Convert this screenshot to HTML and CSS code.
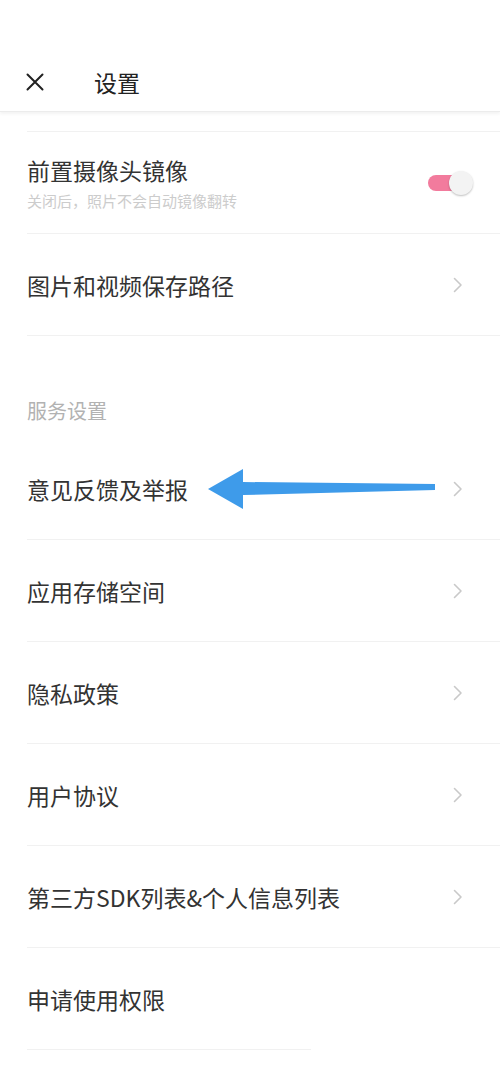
FILE: index.html
```html
<!DOCTYPE html>
<html lang="zh">
<head>
<meta charset="utf-8">
<title>设置</title>
<link rel="stylesheet" href="styles.css">
</head>
<body>
<div class="page">
  <header class="header">
    <svg class="close" width="18" height="18" viewBox="0 0 18 18">
      <path d="M1.5 1.5 L16.5 16.5 M16.5 1.5 L1.5 16.5" stroke="#222" stroke-width="2" stroke-linecap="round" fill="none"/>
    </svg>
    <h1 class="title">设置</h1>
  </header>

  <div class="top-gap"></div>

  <div class="row">
    <div class="text-block">
      <div class="label">前置摄像头镜像</div>
      <div class="sub">关闭后，照片不会自动镜像翻转</div>
    </div>
    <div class="toggle"><span class="track"></span><span class="knob"></span></div>
  </div>

  <div class="row">
    <div class="label">图片和视频保存路径</div>
    <svg class="chev" width="10" height="16" viewBox="0 0 10 16"><polyline points="1.5,1.5 8,8 1.5,14.5" fill="none" stroke="#c9c9c9" stroke-width="1.6" stroke-linecap="round" stroke-linejoin="round"/></svg>
  </div>

  <div class="section">服务设置</div>

  <div class="row annotated">
    <div class="label">意见反馈及举报</div>
    <svg class="chev" width="10" height="16" viewBox="0 0 10 16"><polyline points="1.5,1.5 8,8 1.5,14.5" fill="none" stroke="#c9c9c9" stroke-width="1.6" stroke-linecap="round" stroke-linejoin="round"/></svg>
    <svg class="arrow" width="230" height="40" viewBox="0 0 230 40">
      <polygon points="1,20 36,0 36,13 228,15 228,21 36,26 36,40" fill="#3e9bea"/>
    </svg>
  </div>

  <div class="row">
    <div class="label">应用存储空间</div>
    <svg class="chev" width="10" height="16" viewBox="0 0 10 16"><polyline points="1.5,1.5 8,8 1.5,14.5" fill="none" stroke="#c9c9c9" stroke-width="1.6" stroke-linecap="round" stroke-linejoin="round"/></svg>
  </div>

  <div class="row">
    <div class="label">隐私政策</div>
    <svg class="chev" width="10" height="16" viewBox="0 0 10 16"><polyline points="1.5,1.5 8,8 1.5,14.5" fill="none" stroke="#c9c9c9" stroke-width="1.6" stroke-linecap="round" stroke-linejoin="round"/></svg>
  </div>

  <div class="row">
    <div class="label">用户协议</div>
    <svg class="chev" width="10" height="16" viewBox="0 0 10 16"><polyline points="1.5,1.5 8,8 1.5,14.5" fill="none" stroke="#c9c9c9" stroke-width="1.6" stroke-linecap="round" stroke-linejoin="round"/></svg>
  </div>

  <div class="row">
    <div class="label">第三方SDK列表&amp;个人信息列表</div>
    <svg class="chev" width="10" height="16" viewBox="0 0 10 16"><polyline points="1.5,1.5 8,8 1.5,14.5" fill="none" stroke="#c9c9c9" stroke-width="1.6" stroke-linecap="round" stroke-linejoin="round"/></svg>
  </div>

  <div class="row last">
    <div class="label">申请使用权限</div>
  </div>
  <div class="last-divider"></div>
</div>
</body>
</html>
```

FILE: styles.css
```css
* { box-sizing: border-box; }

html, body {
  margin: 0;
  padding: 0;
  background: #ffffff;
}

body {
  font-family: "Noto Sans CJK SC", "Noto Sans", sans-serif;
  color: #333333;
}

.page {
  width: 500px;
  min-height: 1084px;
  background: #ffffff;
  overflow: hidden;
}

.header {
  height: 112px;
  padding: 52px 0 0 26px;
  display: flex;
  align-items: center;
  border-bottom: 1px solid #ececec;
  box-shadow: 0 2px 3px rgba(0, 0, 0, 0.05);
  position: relative;
  z-index: 1;
}

.close {
  flex: none;
  display: block;
}

.title {
  margin: 0 0 0 50px;
  font-size: 23px;
  font-weight: 400;
  line-height: 30px;
  color: #222222;
}

.top-gap {
  height: 20px;
  margin-left: 27px;
  border-bottom: 1px solid #f1f1f1;
}

.row {
  height: 102px;
  margin-left: 27px;
  padding-right: 27px;
  display: flex;
  align-items: center;
  justify-content: space-between;
  border-bottom: 1px solid #f1f1f1;
}

.row.last {
  border-bottom: none;
  height: 101px;
}

.last-divider {
  margin-left: 27px;
  width: 284px;
  height: 1px;
  background: #f1f1f1;
}

.label {
  font-size: 23px;
  line-height: 30px;
  color: #333333;
  white-space: nowrap;
}

.text-block {
  display: flex;
  flex-direction: column;
}

.sub {
  margin-top: 7px;
  font-size: 15px;
  line-height: 18px;
  color: #cccccc;
}

.chev {
  flex: none;
  display: block;
  margin-right: 10px;
}

.toggle {
  position: relative;
  width: 46px;
  height: 24px;
  flex: none;
  margin-top: 1px;
}

.track {
  position: absolute;
  left: 1px;
  top: 4px;
  width: 38px;
  height: 16px;
  border-radius: 8px;
  background: #f27b9d;
}

.knob {
  position: absolute;
  right: 0;
  top: 0;
  width: 24px;
  height: 24px;
  border-radius: 50%;
  background: #f3f3f3;
  box-shadow: 0 1px 2px rgba(0, 0, 0, 0.25);
}

.section {
  height: 102px;
  padding: 0 0 13px 27px;
  display: flex;
  align-items: flex-end;
  font-size: 20px;
  line-height: 28px;
  color: #b2b2b2;
}

.annotated {
  position: relative;
}

.arrow {
  position: absolute;
  left: 180px;
  top: 31px;
  display: block;
}
```
